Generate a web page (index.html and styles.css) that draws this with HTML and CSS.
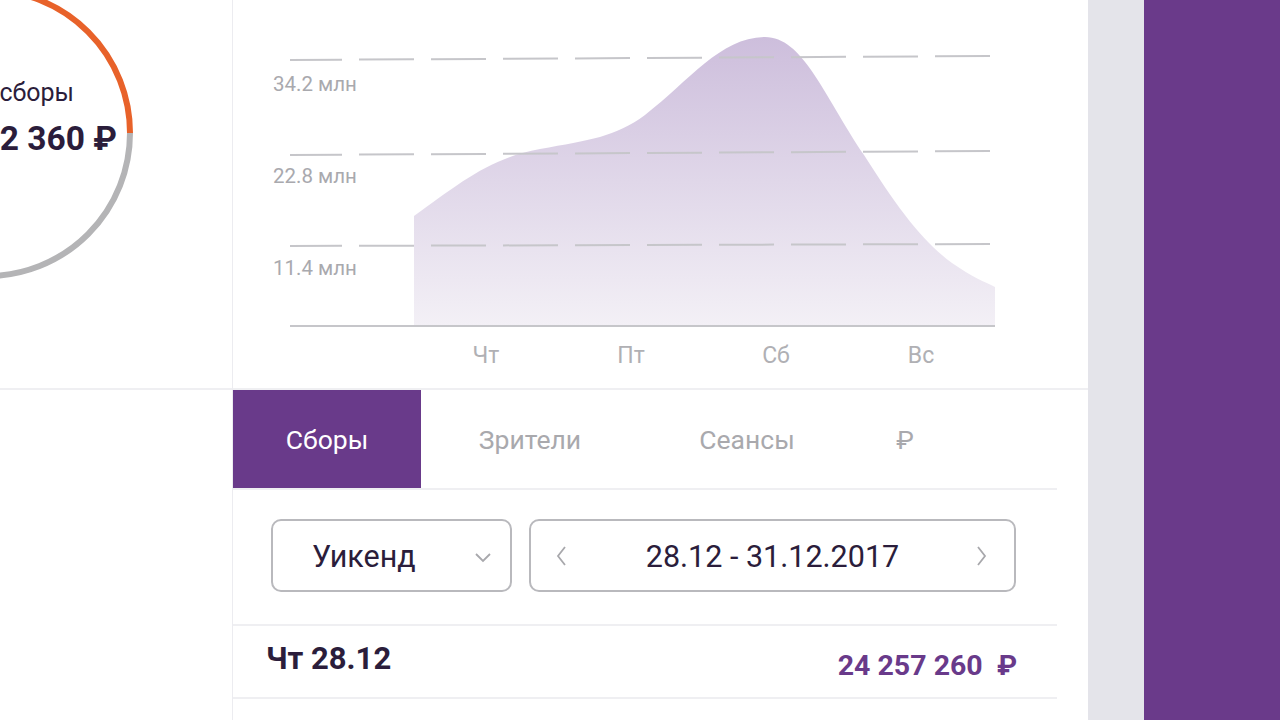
FILE: index.html
```html
<!DOCTYPE html>
<html lang="ru">
<head>
<meta charset="utf-8">
<title>Сборы</title>
<link rel="stylesheet" href="styles.css">
</head>
<body>
<aside class="side">
  <div class="side-top">
    <svg class="ring" width="232" height="388" viewBox="0 0 232 388">
      <path d="M -13 -10 A 143 143 0 0 1 130 133" fill="none" stroke="#e8622a" stroke-width="6"/>
      <path d="M 130 133 A 143 143 0 0 1 -13 276 A 143 143 0 0 1 -156 133" fill="none" stroke="#b4b4b6" stroke-width="6"/>
    </svg>
    <div class="ring-text">
      <div class="ring-label">сборы</div>
      <div class="ring-value">2 360 ₽</div>
    </div>
  </div>
</aside>
<main class="main">
  <section class="chart">
    <svg class="chart-svg" width="855" height="388" viewBox="233 0 855 388">
      <defs>
        <linearGradient id="fillGrad" gradientUnits="userSpaceOnUse" x1="0" y1="37" x2="0" y2="326">
          <stop offset="0" stop-color="#cdbedc"/>
          <stop offset="1" stop-color="#f3f0f6"/>
        </linearGradient>
      </defs>
      <path d="M414,326 L414,216 C460,183 490,158 540,149 C590,140 615,137 645,115 C690,80 720,38 764,37 C802,36 822,92 864,155 C897,207 922,241 952,263 C972,277 985,282 995,287 L995,326 Z" fill="url(#fillGrad)"/>
      <g stroke="#c6c6ca" stroke-width="2" fill="none">
        <line x1="290" y1="60" x2="993" y2="56" stroke-dasharray="55 17" stroke-dashoffset="3"/>
        <line x1="290" y1="155" x2="993" y2="151" stroke-dasharray="55 17" stroke-dashoffset="3"/>
        <line x1="290" y1="246" x2="993" y2="244" stroke-dasharray="55 17" stroke-dashoffset="3"/>
        <line x1="290" y1="326" x2="995" y2="326"/>
      </g>
      <g class="axis-y">
        <text x="273" y="91">34.2 млн</text>
        <text x="273" y="183">22.8 млн</text>
        <text x="273" y="275">11.4 млн</text>
      </g>
      <g class="axis-x" text-anchor="middle">
        <text x="486" y="363">Чт</text>
        <text x="631" y="363">Пт</text>
        <text x="776" y="363">Сб</text>
        <text x="921" y="363">Вс</text>
      </g>
    </svg>
  </section>
  <nav class="tabs">
    <div class="tab tab-active tab-1">Сборы</div>
    <div class="tab tab-2">Зрители</div>
    <div class="tab tab-3">Сеансы</div>
    <div class="tab tab-4">₽</div>
  </nav>
  <div class="filters">
    <div class="select">
      <span class="select-text">Уикенд</span>
      <svg class="chev" width="18" height="12" viewBox="0 0 18 12"><path d="M2 3 L9 10 L16 3" fill="none" stroke="#a8a8ac" stroke-width="1.8"/></svg>
    </div>
    <div class="date">
      <svg class="chev-side" width="12" height="22" viewBox="0 0 12 22"><path d="M10 2 L3 11 L10 20" fill="none" stroke="#a8a8ac" stroke-width="1.8"/></svg>
      <span class="date-text">28.12 - 31.12.2017</span>
      <svg class="chev-side" width="12" height="22" viewBox="0 0 12 22"><path d="M2 2 L9 11 L2 20" fill="none" stroke="#a8a8ac" stroke-width="1.8"/></svg>
    </div>
  </div>
  <div class="row">
    <span class="row-day">Чт 28.12</span>
    <span class="row-sum">24 257 260&nbsp; ₽</span>
  </div>
</main>
<div class="gutter"></div>
<div class="rail"></div>
</body>
</html>
```

FILE: styles.css
```css
html, body {
  margin: 0;
  padding: 0;
}
body {
  width: 1280px;
  height: 720px;
  overflow: hidden;
  display: flex;
  background: #ffffff;
  font-family: Roboto, "Noto Sans", "Liberation Sans", sans-serif;
  color: #2b1d3b;
}
.side {
  width: 232px;
  flex: none;
  border-right: 1px solid #ececf0;
  background: #fff;
}
.side-top {
  position: relative;
  height: 388px;
  border-bottom: 2px solid #efeff2;
  overflow: hidden;
}
.ring {
  position: absolute;
  left: 0;
  top: 0;
}
.ring-text {
  position: relative;
  width: 117px;
  padding-top: 77px;
  display: flex;
  flex-direction: column;
  align-items: flex-end;
  white-space: nowrap;
}
.ring-label {
  font-size: 25px;
  line-height: 32px;
  margin-right: 43px;
  color: #2b1d3b;
}
.ring-value {
  margin-top: 9px;
  font-size: 33.5px;
  line-height: 42px;
  font-weight: 700;
  color: #2b1d3b;
}
.main {
  width: 855px;
  flex: none;
  background: #fff;
}
.chart {
  height: 388px;
  border-bottom: 2px solid #efeff2;
}
.chart-svg {
  display: block;
}
.axis-y text {
  font-family: Roboto, "Liberation Sans", sans-serif;
  font-size: 20.5px;
  fill: #a9a9ae;
}
.axis-x text {
  font-family: Roboto, "Liberation Sans", sans-serif;
  font-size: 23px;
  fill: #b0b0b4;
}
.tabs {
  display: flex;
  height: 98px;
  margin-right: 31px;
  border-bottom: 2px solid #efeff2;
}
.tab {
  display: flex;
  align-items: center;
  justify-content: center;
  font-size: 26.5px;
  color: #a9a9ad;
}
.tab-active {
  background: #693a8a;
  color: #ffffff;
}
.tab-1 { width: 188px; }
.tab-2 { width: 218px; }
.tab-3 { width: 216px; }
.tab-4 { width: 100px; }
.filters {
  display: flex;
  gap: 17px;
  padding: 29px 0 32px 38px;
  margin-right: 31px;
  border-bottom: 2px solid #efeff2;
}
.select, .date {
  box-sizing: border-box;
  height: 73px;
  border: 2px solid #b9b9bd;
  border-radius: 10px;
  display: flex;
  align-items: center;
}
.select {
  width: 241px;
  padding: 0 18px 0 39px;
  justify-content: space-between;
}
.select-text, .date-text {
  font-size: 30.5px;
  color: #2b1d3b;
  margin-top: 2px;
}
.chev {
  margin-top: 3px;
}
.date {
  width: 487px;
  padding: 0 26px 0 24px;
  justify-content: space-between;
}
.date-text {
  margin-left: 2px;
}
.row {
  height: 71px;
  display: flex;
  align-items: center;
  justify-content: space-between;
  padding: 0 40px 0 33px;
  margin-right: 31px;
  border-bottom: 2px solid #efeff2;
}
.row-day {
  font-size: 31px;
  font-weight: 700;
  color: #2b1d3b;
  margin-top: -6px;
}
.row-sum {
  font-size: 28.5px;
  font-weight: 700;
  color: #693a8a;
  margin-top: 7px;
}
.gutter {
  width: 56px;
  flex: none;
  background: #e4e4ea;
}
.rail {
  flex: 1;
  background: #6a3a8a;
}
```
